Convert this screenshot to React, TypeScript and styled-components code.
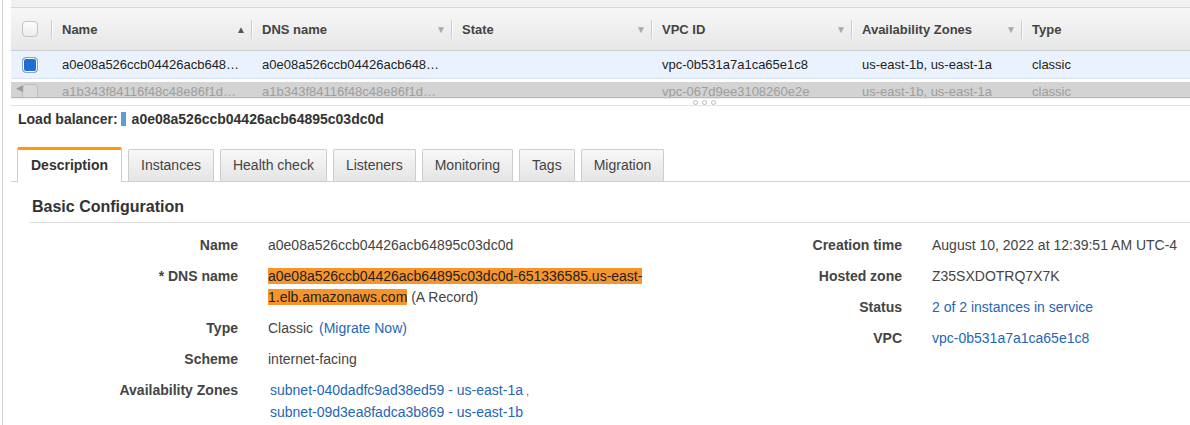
import React from 'react';
import styled, { createGlobalStyle, css } from 'styled-components';

const GlobalStyle = createGlobalStyle`
  html, body {
    margin: 0;
    padding: 0;
    background: #fff;
  }
  body {
    font-family: "Liberation Sans", Arial, sans-serif;
    font-size: 14px;
    color: #444;
  }
`;

const COLS = '40px 200px 200px 200px 200px 170px 1fr';

const Page = styled.div`
  margin-left: 2px;
  border-left: 1px solid #d2d2d2;
  padding-left: 8px;
  height: 425px;
  overflow: hidden;
`;

// --- table ---

const TopStrip = styled.div`
  height: 7px;
  background: #f1f1f1;
  border-bottom: 1px solid #d6d6d6;
`;

const HeaderRow = styled.div`
  display: grid;
  grid-template-columns: ${COLS};
  height: 42px;
  align-items: center;
  background: linear-gradient(#f7f7f7, #e7e7e7);
  border-bottom: 1px solid #cfcfcf;
  font-size: 13px;
`;

const HeaderCell = styled.div`
  display: flex;
  align-items: center;
  height: 100%;
  padding-right: 5px;
  min-width: 0;
`;

const Sep = styled.span`
  width: 1px;
  height: 19px;
  background: #cdcdcd;
  box-shadow: 1px 0 0 #fafafa;
  margin-right: 10px;
`;

const HeaderLabel = styled.span`
  flex: 1;
  font-weight: bold;
  color: #444;
  white-space: nowrap;
`;

const SortArrow = styled.span<{ $active?: boolean }>`
  font-size: 10px;
  color: ${(p) => (p.$active ? '#555' : '#aaa')};
`;

const BoxCell = styled.div`
  padding-left: 11px;
  display: flex;
  align-items: center;
`;

const Checkbox = styled.span<{ $checked?: boolean; $faded?: boolean }>`
  display: inline-block;
  width: 14px;
  height: 14px;
  border-radius: 4px;
  border: 1px solid #c4c4c4;
  background: linear-gradient(#fdfdfd, #ececec);
  ${(p) =>
    p.$checked &&
    css`
      border-color: #8aa6c8;
      background: #1e6fd0;
      box-shadow: inset 0 0 0 1px #fff;
    `}
  ${(p) =>
    p.$faded &&
    css`
      border-color: #bcbcbc;
      background: #d9d9d9;
    `}
`;

const DataRow = styled.div<{ $selected?: boolean }>`
  display: grid;
  grid-template-columns: ${COLS};
  height: 27px;
  align-items: center;
  font-size: 13px;
  color: #222;
  background: ${(p) => (p.$selected ? '#eaf3fd' : '#fff')};
  border-bottom: 1px solid #d9e3ef;
`;

const Cell = styled.div`
  padding: 0 8px 0 11px;
  white-space: nowrap;
  overflow: hidden;
  text-overflow: ellipsis;
`;

const ScrollBand = styled.div`
  margin-top: 3px;
  height: 15px;
  background: #d3d3d3;
  border-bottom: 1px solid #b9b9b9;
  overflow: hidden;
  position: relative;
`;

const GhostRow = styled.div`
  display: grid;
  grid-template-columns: ${COLS};
  font-size: 13px;
  color: #9e9e9e;
  padding-top: 2px;
  line-height: 16px;
`;

const ScrollArrow = styled.span`
  position: absolute;
  left: 5px;
  top: 1px;
  font-size: 9px;
  color: #9a9a9a;
`;

const Resizer = styled.div`
  height: 6px;
  border-top: 1px solid #eeeeee;
  border-bottom: 1px solid #e3e3e3;
  display: flex;
  gap: 4px;
  padding-left: 682px;
  align-items: flex-start;
`;

const Dot = styled.span`
  width: 3px;
  height: 3px;
  border-radius: 50%;
  border: 1px solid #bdbdbd;
  margin-top: 1px;
`;

// --- details pane ---

const LbLine = styled.div`
  padding: 5px 0 0 7px;
  line-height: 16px;
  font-weight: bold;
  color: #333;
  display: flex;
  align-items: center;
`;

const LbMarker = styled.span`
  display: inline-block;
  width: 5px;
  height: 14px;
  background: #5d9cd8;
  margin: 0 6px 0 3px;
`;

const TabBar = styled.div`
  display: flex;
  align-items: flex-end;
  gap: 6px;
  margin-top: 20px;
  padding-left: 6px;
  border-bottom: 1px solid #cfcfcf;
`;

const Tab = styled.div<{ $active?: boolean }>`
  height: 31px;
  line-height: 31px;
  padding: 0 12px;
  border: 1px solid #cdcdcd;
  border-bottom: none;
  border-radius: 2px 2px 0 0;
  background: linear-gradient(#f8f8f8, #e4e4e4);
  color: #444;
  ${(p) =>
    p.$active &&
    css`
      height: 32px;
      line-height: 30px;
      padding: 0 13px;
      border-top: 3px solid #f90;
      margin-bottom: -1px;
      background: #fff;
      font-weight: bold;
      color: #333;
    `}
`;

const Heading = styled.h2`
  margin: 0 0 0 19px;
  padding: 15px 0 5px 2px;
  font-size: 16px;
  line-height: 20px;
  color: #333;
  border-bottom: 1px solid #dddddd;
`;

const Details = styled.div`
  display: flex;
  padding-top: 12px;
`;

const DetailList = styled.dl<{ $label: number; $value?: number }>`
  margin: 0;
  display: grid;
  grid-template-columns: ${(p) => `${p.$label}px ${p.$value ? `${p.$value}px` : 'auto'}`};
  column-gap: 30px;
  align-content: start;
  line-height: 21px;
`;

const Label = styled.dt`
  text-align: right;
  font-weight: bold;
  color: #444;
  padding-bottom: 10px;
`;

const Value = styled.dd`
  margin: 0;
  color: #444;
  padding-bottom: 10px;
`;

const Highlight = styled.span`
  background: #f7952d;
  color: #222;
`;

const Link = styled.a`
  color: #1f66b6;
  text-decoration: none;
`;

const MigrateLink = styled(Link)`
  margin-left: 2px;
`;

const SubnetLink = styled(Link)`
  margin-left: 2px;
`;

const Comma = styled.span`
  font-size: 11px;
  color: #666;
`;

const columns = [
  { label: 'Name', arrow: '▲', active: true },
  { label: 'DNS name', arrow: '▼' },
  { label: 'State', arrow: '▼' },
  { label: 'VPC ID', arrow: '▼' },
  { label: 'Availability Zones', arrow: '▼' },
  { label: 'Type', arrow: '' },
];

const rows = [
  ['a0e08a526ccb04426acb64895c03dc0d', 'a0e08a526ccb04426acb64895c03dc0d-651336585', '', 'vpc-0b531a7a1ca65e1c8', 'us-east-1b, us-east-1a', 'classic'],
  ['a1b343f84116f48c48e86f1d5a7c2b0e', 'a1b343f84116f48c48e86f1d5a7c2b0e-112233', '', 'vpc-067d9ee3108260e2e', 'us-east-1b, us-east-1a', 'classic'],
];

const tabs = ['Description', 'Instances', 'Health check', 'Listeners', 'Monitoring', 'Tags', 'Migration'];

export default function App() {
  return (
    <Page>
      <GlobalStyle />
      <TopStrip />
      <HeaderRow>
        <BoxCell>
          <Checkbox />
        </BoxCell>
        {columns.map((c) => (
          <HeaderCell key={c.label}>
            <Sep />
            <HeaderLabel>{c.label}</HeaderLabel>
            {c.arrow && <SortArrow $active={c.active}>{c.arrow}</SortArrow>}
          </HeaderCell>
        ))}
      </HeaderRow>
      <DataRow $selected>
        <BoxCell>
          <Checkbox $checked />
        </BoxCell>
        {rows[0].map((v, i) => (
          <Cell key={i}>{v}</Cell>
        ))}
      </DataRow>
      <ScrollBand>
        <ScrollArrow>◀</ScrollArrow>
        <GhostRow>
          <BoxCell>
            <Checkbox $faded />
          </BoxCell>
          {rows[1].map((v, i) => (
            <Cell key={i}>{v}</Cell>
          ))}
        </GhostRow>
      </ScrollBand>
      <Resizer>
        <Dot />
        <Dot />
        <Dot />
      </Resizer>

      <LbLine>
        Load balancer:
        <LbMarker />
        a0e08a526ccb04426acb64895c03dc0d
      </LbLine>

      <TabBar>
        {tabs.map((t, i) => (
          <Tab key={t} $active={i === 0}>
            {t}
          </Tab>
        ))}
      </TabBar>

      <Heading>Basic Configuration</Heading>

      <Details>
        <DetailList $label={227} $value={392}>
          <Label>Name</Label>
          <Value>a0e08a526ccb04426acb64895c03dc0d</Value>
          <Label>* DNS name</Label>
          <Value>
            <Highlight>a0e08a526ccb04426acb64895c03dc0d-651336585.us-east-1.elb.amazonaws.com</Highlight> (A Record)
          </Value>
          <Label>Type</Label>
          <Value>
            Classic <MigrateLink href="#">(Migrate Now)</MigrateLink>
          </Value>
          <Label>Scheme</Label>
          <Value>internet-facing</Value>
          <Label>Availability Zones</Label>
          <Value>
            <SubnetLink href="#">subnet-040dadfc9ad38ed59 - us-east-1a</SubnetLink>
            <Comma> ,</Comma>
            <br />
            <SubnetLink href="#">subnet-09d3ea8fadca3b869 - us-east-1b</SubnetLink>
          </Value>
        </DetailList>
        <DetailList $label={242}>
          <Label>Creation time</Label>
          <Value>August 10, 2022 at 12:39:51 AM UTC-4</Value>
          <Label>Hosted zone</Label>
          <Value>Z35SXDOTRQ7X7K</Value>
          <Label>Status</Label>
          <Value>
            <Link href="#">2 of 2 instances in service</Link>
          </Value>
          <Label>VPC</Label>
          <Value>
            <Link href="#">vpc-0b531a7a1ca65e1c8</Link>
          </Value>
        </DetailList>
      </Details>
    </Page>
  );
}
